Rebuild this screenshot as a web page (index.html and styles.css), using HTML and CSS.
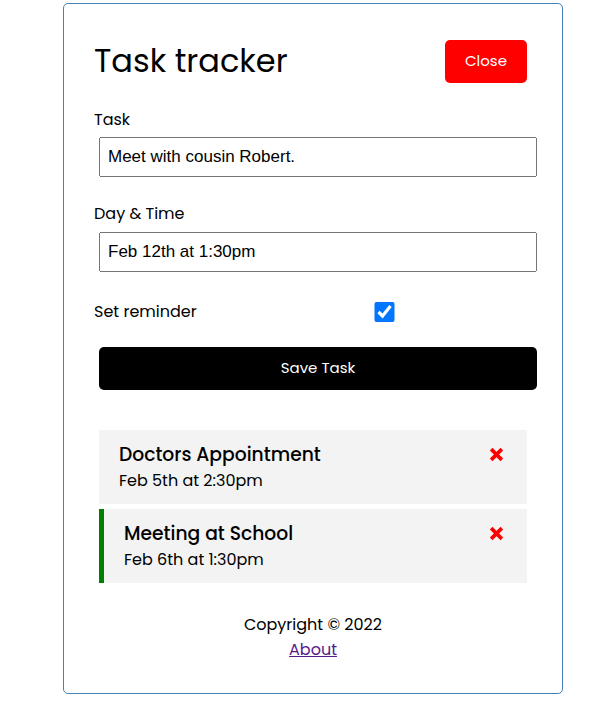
FILE: index.html
```html
<!DOCTYPE html>
<html lang="en">
<head>
    <meta charset="UTF-8">
    <meta name="viewport" content="width=device-width, initial-scale=1.0">
    <title>Task Tracker</title>
    <link rel="stylesheet" href="styles.css">
</head>
<body>
    <div class="container">
        <header class="header">
            <h1>Task tracker</h1>
            <button class="btn btn-close">Close</button>
        </header>

        <!-- Form to add a new task -->
        <form class="add-form" onsubmit="return false">
            <div class="form-control">
                <label>Task</label>
                <input type="text" value="Meet with cousin Robert.">
            </div>
            <div class="form-control">
                <label>Day &amp; Time</label>
                <input type="text" value="Feb 12th at 1:30pm">
            </div>
            <div class="form-control form-control-check">
                <label>Set reminder</label>
                <input type="checkbox" checked>
            </div>
            <input type="submit" value="Save Task" class="btn btn-block">
        </form>

        <!-- Tasks -->
        <div class="task">
            <h3>Doctors Appointment
                <svg class="del" viewBox="0 0 14 14"><path d="M2 2 L12 12 M12 2 L2 12"/></svg>
            </h3>
            <p>Feb 5th at 2:30pm</p>
        </div>
        <div class="task reminder">
            <h3>Meeting at School
                <svg class="del" viewBox="0 0 14 14"><path d="M2 2 L12 12 M12 2 L2 12"/></svg>
            </h3>
            <p>Feb 6th at 1:30pm</p>
        </div>

        <footer>
            <p>Copyright &copy; 2022</p>
            <a href="#">About</a>
        </footer>
    </div>
</body>
</html>
```

FILE: styles.css
```css
* {
    box-sizing: border-box;
    margin: 0;
    padding: 0;
}

body {
    font-family: Poppins, Inter, sans-serif;
    line-height: 1.56;
}

.container {
    width: 500px;
    margin: 3px 0 15px 63px;
    overflow: auto;
    min-height: 300px;
    border: 1px solid steelblue;
    padding: 30px;
    border-radius: 5px;
}

.header {
    display: flex;
    justify-content: space-between;
    align-items: center;
    margin-bottom: 20px;
    padding-top: 1px;
}

.header h1 {
    font-size: 32px;
    font-weight: 400;
}

.btn {
    display: inline-block;
    background: #000;
    color: #fff;
    border: none;
    padding: 10px 20px;
    margin: 5px;
    border-radius: 5px;
    cursor: pointer;
    font-size: 15px;
    font-family: inherit;
    line-height: 1.5;
}

.btn-close {
    background: red;
}

.btn-block {
    display: block;
    width: 100%;
}

.add-form {
    margin-bottom: 40px;
}

.form-control {
    margin: 20px 0;
}

.form-control label {
    display: block;
}

.form-control input {
    width: 100%;
    height: 40px;
    margin: 5px;
    padding: 3px 7px;
    font-size: 17px;
    font-family: "Liberation Sans", Arial, sans-serif;
}

.form-control-check {
    display: flex;
    align-items: center;
    justify-content: space-between;
}

.form-control-check label {
    flex: 1;
}

.form-control-check input {
    flex: 2;
    height: 20px;
}

.task {
    background: #f3f3f3;
    margin: 5px;
    padding: 10px 20px;
    cursor: pointer;
}

.task.reminder {
    border-left: 5px solid green;
}

.task h3 {
    display: flex;
    align-items: center;
    justify-content: space-between;
    font-size: 18.72px;
    font-weight: 500;
}

.del {
    width: 15px;
    height: 15px;
    margin-right: 3px;
    stroke: red;
    stroke-width: 3.4;
    fill: none;
}

footer {
    margin-top: 30px;
    text-align: center;
}

footer a {
    color: #551a8b;
}
```
